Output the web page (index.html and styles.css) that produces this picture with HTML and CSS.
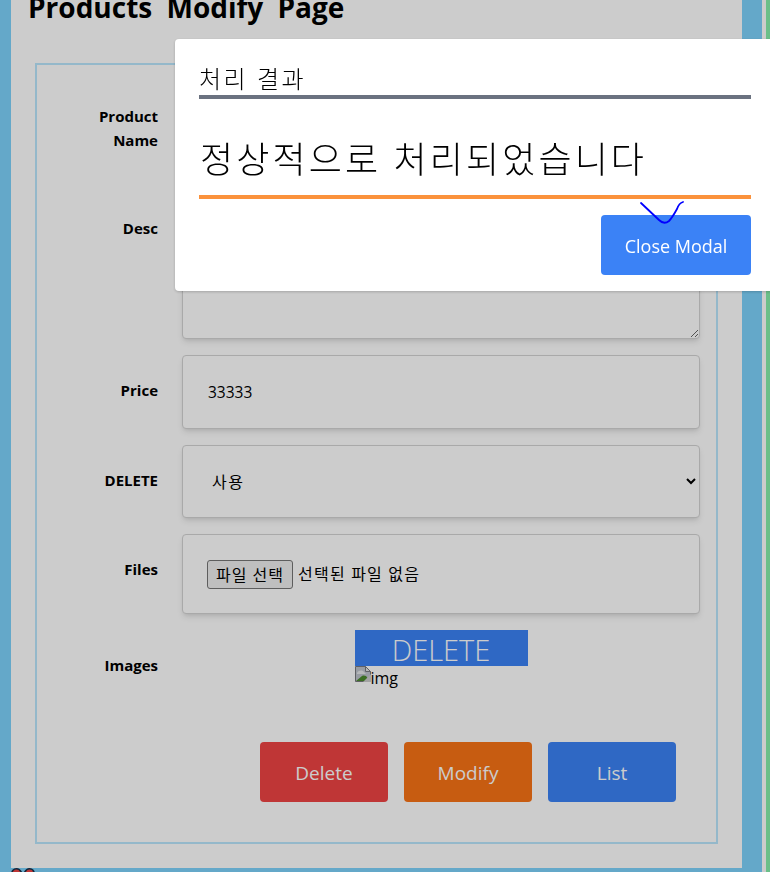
FILE: index.html
```html
<!DOCTYPE html>
<html lang="ko">
<head>
<meta charset="utf-8">
<title>Products Modify Page</title>
<link rel="stylesheet" href="styles.css">
</head>
<body>
<div class="shell">
  <div class="sky">
    <main class="page">
      <h1 class="title">Products Modify Page</h1>
      <form class="box">
        <div class="row">
          <label class="label">Product Name</label>
          <input class="field field-tall" type="text" value="">
        </div>
        <div class="row">
          <label class="label">Desc</label>
          <textarea class="field area"></textarea>
        </div>
        <div class="row">
          <label class="label">Price</label>
          <input class="field field-num" type="text" value="33333">
        </div>
        <div class="row">
          <label class="label">DELETE</label>
          <select class="field pick"><option>사용</option></select>
        </div>
        <div class="row">
          <label class="label">Files</label>
          <div class="field files">
            <button class="file-btn" type="button">파일 선택</button>
            <span class="file-note">선택된 파일 없음</span>
          </div>
        </div>
        <div class="row row-images">
          <label class="label">Images</label>
          <div class="gallery">
            <div class="thumb">
              <div class="thumb-del">DELETE</div>
              <div class="broken">
                <svg class="broken-icon" width="16" height="16" viewBox="0 0 16 16"><path d="M.5.5h10l5 5v10H.5z" fill="#bfc3cc" stroke="#77797d"/><path d="M10.5.5v5h5z" fill="#e4e4e4" stroke="#77797d"/><path d="M2 7c2-3 5-3 7-1l2 2H2z" fill="#e6e8ea"/><path d="M1 15l6-5c2-1 3 0 4 0l4 5z" fill="#4b8a2e"/><path d="M8 16L16 8v8z" fill="#ccc"/></svg><span>img</span>
              </div>
            </div>
          </div>
        </div>
        <div class="actions">
          <button class="act act-red" type="button">Delete</button>
          <button class="act act-orange" type="button">Modify</button>
          <button class="act act-blue" type="button">List</button>
        </div>
      </form>
    </main>
    <div class="footer-mark">
      <svg width="24" height="20" viewBox="0 0 24 20"><path d="M12 8C10 2 8 .8 5.500 .8 2.500 .8 .8 3 .8 6c0 5 6 10 11.200 13 5.200-3 11.200-8 11.200-13 0-3-1.700-5.200-4.700-5.200C16 .8 14 2 12 8z" fill="#ef4444" stroke="#17324a" stroke-width="1.600"/></svg>
    </div>
  </div>
  <div class="green"></div>
</div>
<div class="scrim"></div>
<div class="modal">
  <div class="modal-title">처리 결과</div>
  <div class="modal-body">정상적으로 처리되었습니다</div>
  <div class="modal-foot"><button class="close" type="button">Close Modal</button></div>
</div>
<svg class="scribble" width="50" height="28" viewBox="0 0 50 28"><path d="M1 2 L19 19 Q24 24 29 20 Q32 17 37 8 Q39 2 43 1" fill="none" stroke="#0000ff" stroke-width="1.800" stroke-linecap="round"/></svg>
</body>
</html>
```
FILE: styles.css
```css
* { box-sizing: border-box; }
html, body { margin: 0; height: 100%; overflow: hidden; background: #fff; }
body { font-family: "Open Sans", "Noto Sans CJK KR", sans-serif; font-size: 16px; color: #000; }

.shell { display: flex; height: 872px; overflow: hidden; }
.sky { width: 762px; height: 872px; padding: 0 20px 0 11px; background: #7dd3fc; overflow: hidden; }
.green { width: 4px; margin-left: 4px; background: #86efac; }

.page { height: 868px; background: #fff; padding: 0 24px 0 24px; overflow: hidden; }
.title { margin: -14px 0 0 -7px; font-size: 28px; line-height: 42px; font-weight: 700; word-spacing: 7px; }

.box { margin-top: 35px; border: 2px solid #bae6fd; height: 781px; padding: 16px; display: flex; flex-direction: column; gap: 16px; }
.row { display: flex; }
.row-images { height: 96px; }
.label { width: 129px; flex: none; padding: 23px 24px 24px; font-size: 15px; line-height: 24px; font-weight: 700; text-align: right; }

.field { flex: 1; min-width: 0; display: block; padding: 24px; border: 1px solid #d4d4d4; border-radius: 4px; background: #fff; box-shadow: 0 4px 6px -1px rgba(0,0,0,.1), 0 2px 4px -2px rgba(0,0,0,.1); font-family: inherit; font-size: 16px; line-height: 24px; color: #000; }
.field-tall { height: 96px; }
.field-num { font-size: 15.500px; padding-left: 25px; }
.area { height: 146px; resize: vertical; }
.pick { height: 73px; padding: 24px 24px 24px 25px; letter-spacing: 1.500px; }
.files { height: 80px; display: flex; align-items: center; gap: 5px; padding: 24px; }
.file-btn { height: 29px; padding: 0 8px; border: 1px solid #767676; border-radius: 3px; background: #efefef; font-family: inherit; font-size: 16px; letter-spacing: 1px; color: #000; }
.file-note { font-size: 16px; letter-spacing: 1.200px; }

.gallery { flex: 1; display: flex; justify-content: center; }
.thumb { width: 173px; }
.thumb-del { height: 36px; background: #3b82f6; color: #fff; font-size: 29px; line-height: 40px; font-weight: 300; text-align: center; }
.broken { display: flex; align-items: flex-start; font-size: 16px; line-height: 24px; }
.broken-icon { flex: none; }

.actions { display: flex; gap: 16px; margin-left: 207px; }
.act { width: 128px; height: 60px; padding-top: 2px; border: 0; border-radius: 4px; color: #fff; font-family: inherit; font-size: 19px; font-weight: 500; }
.act-red { background: #ef4444; }
.act-orange { background: #f97316; }
.act-blue { background: #3b82f6; }

.footer-mark { height: 20px; display: flex; }

.scrim { position: fixed; inset: 0; background: rgba(0,0,0,.2); }
.modal { position: fixed; left: 175px; top: 39px; width: 600px; height: 252px; padding: 24px 24px 16px; background: #fff; border-radius: 4px; box-shadow: 0 1px 3px rgba(0,0,0,.2); }
.modal-title { height: 36px; border-bottom: 4px solid #6b7280; font-size: 24px; line-height: 32px; letter-spacing: 2.500px; font-weight: 300; }
.modal-body { height: 100px; padding: 37px 0 0 1px; border-bottom: 4px solid #fb923c; font-size: 36px; line-height: 48px; letter-spacing: 3.100px; font-weight: 300; }
.modal-foot { display: flex; justify-content: flex-end; margin-top: 16px; }
.close { width: 150px; height: 60px; padding-top: 2px; border: 0; border-radius: 4px; background: #3b82f6; color: #fff; font-family: inherit; font-size: 18px; }
.scribble { position: fixed; left: 640px; top: 201px; }
```
